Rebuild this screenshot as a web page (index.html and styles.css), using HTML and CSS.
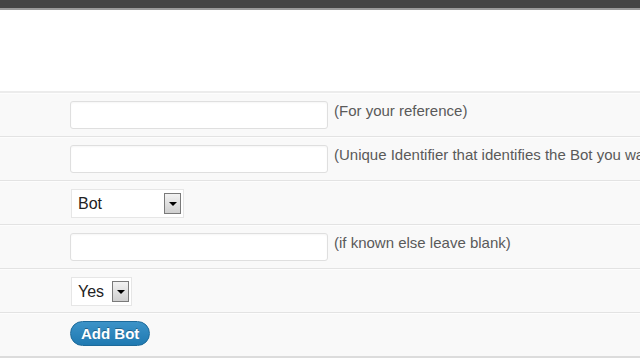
FILE: index.html
```html
<!DOCTYPE html>
<html>
<head>
<meta charset="utf-8">
<link rel="stylesheet" href="styles.css">
</head>
<body>
<div class="topbar"></div>
<div class="header"></div>
<div class="form">
  <div class="row">
    <div class="label"></div>
    <div class="field"><span class="input"></span><span class="desc">(For your reference)</span></div>
  </div>
  <div class="row">
    <div class="label"></div>
    <div class="field"><span class="input"></span><span class="desc">(Unique Identifier that identifies the Bot you want to track)</span></div>
  </div>
  <div class="row">
    <div class="label"></div>
    <div class="field"><span class="select select-wide"><span class="sel-text">Bot</span><span class="arrow"><span class="tri"></span></span></span></div>
  </div>
  <div class="row">
    <div class="label"></div>
    <div class="field"><span class="input"></span><span class="desc">(if known else leave blank)</span></div>
  </div>
  <div class="row">
    <div class="label"></div>
    <div class="field"><span class="select select-narrow"><span class="sel-text">Yes</span><span class="arrow"><span class="tri"></span></span></span></div>
  </div>
  <div class="row row-last">
    <div class="label"></div>
    <div class="field"><span class="button">Add Bot</span></div>
  </div>
</div>
</body>
</html>
```
FILE: styles.css
```css
html, body {
  margin: 0;
  padding: 0;
  background: #fff;
  overflow: hidden;
  width: 640px;
  height: 360px;
}
body {
  font-family: "Liberation Sans", Arial, sans-serif;
}
.topbar {
  height: 8px;
  background: #444;
  border-bottom: 2px solid #9a9a9a;
}
.header {
  height: 81px;
  background: #fff;
  border-bottom: 2px solid #ececec;
}
.form {
  background: #f9f9f9;
  overflow: hidden;
}
.row {
  display: flex;
  height: 42px;
  border-bottom: 1px solid #e3e3e3;
  border-top: 1px solid #fdfdfd;
}
.row-last {
  border-bottom: 2px solid #dcdcdc;
}
.label {
  width: 70px;
  flex: none;
}
.field {
  display: flex;
  align-items: flex-start;
  padding-top: 7px;
  white-space: nowrap;
}
.input {
  display: block;
  width: 256px;
  height: 26px;
  background: #fff;
  border: 1px solid #dfdfdf;
  border-radius: 3px;
  box-shadow: inset 0 1px 2px rgba(0,0,0,0.04);
  flex: none;
}
.desc {
  margin-left: 6px;
  margin-top: 1px;
  font-size: 15px;
  color: #5a5a5a;
  line-height: 18px;
}
.select {
  display: flex;
  align-items: center;
  justify-content: space-between;
  height: 29px;
  box-sizing: border-box;
  background: #fff;
  border: 1px solid #e6e6e6;
  padding: 0 2px 0 6px;
  margin-left: 1px;
}
.select-wide {
  width: 113px;
}
.select-narrow {
  width: 61px;
}
.sel-text {
  font-size: 16px;
  color: #222;
  margin-right: 3px;
}
.arrow {
  display: flex;
  align-items: center;
  justify-content: center;
  width: 15px;
  height: 19px;
  border: 1px solid #7a7a7a;
  background: linear-gradient(#f2f2f2, #cfcfcf);
}
.tri {
  width: 0;
  height: 0;
  border-left: 4px solid transparent;
  border-right: 4px solid transparent;
  border-top: 4px solid #000;
}
.button {
  display: inline-block;
  height: 25px;
  line-height: 23px;
  box-sizing: border-box;
  padding: 0 10px;
  border-radius: 13px;
  border: 1px solid #1d6a9a;
  background: linear-gradient(#3c93c8, #1f79b1);
  color: #fff;
  font-weight: bold;
  font-size: 15px;
  text-shadow: 0 -1px 0 rgba(0,0,0,0.3);
}
```
